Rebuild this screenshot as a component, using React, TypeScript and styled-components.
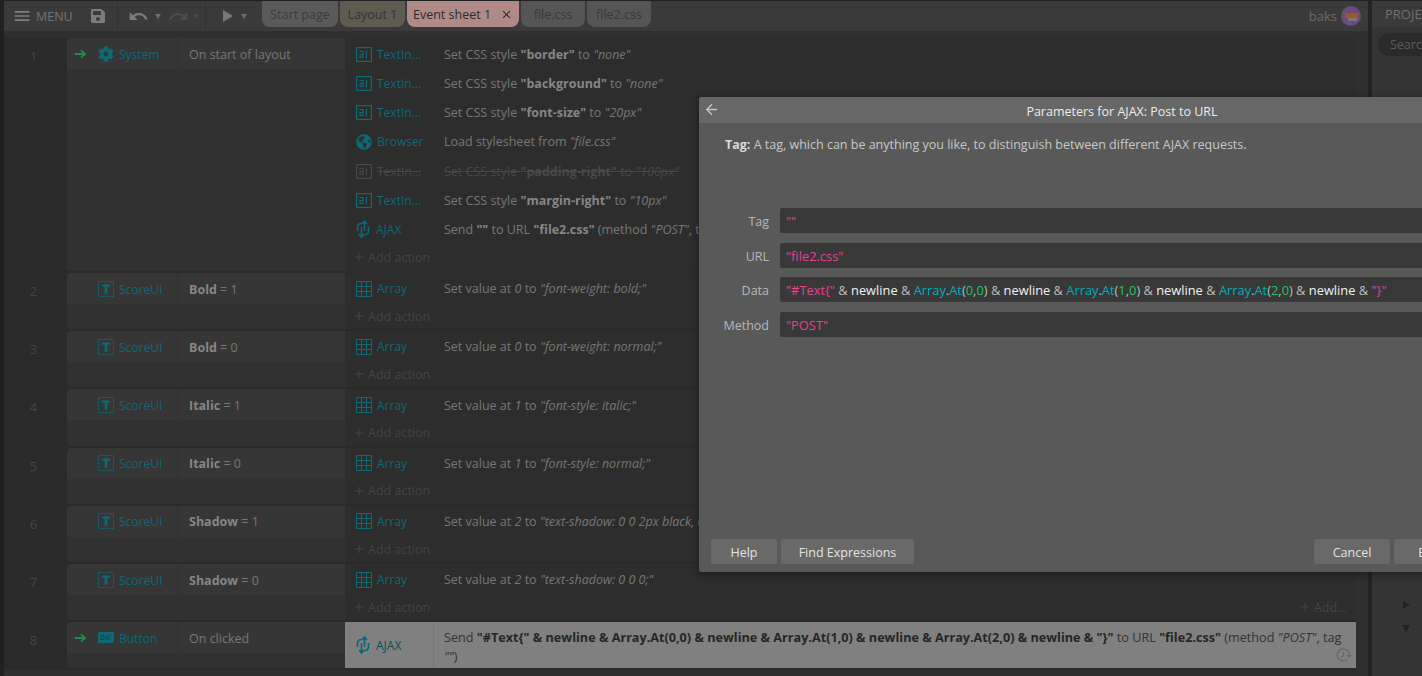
import React from 'react';
import styled, { createGlobalStyle } from 'styled-components';
import { FaCog, FaGlobeAmericas, FaSave } from 'react-icons/fa';
import { MdAdd, MdArrowBack, MdClose, MdHistory, MdMenu, MdRedo, MdUndo } from 'react-icons/md';

const Global = createGlobalStyle`
  html, body { margin:0; padding:0; height:100%; overflow:hidden; background:#232323; }
  body { font-family:"Open Sans", "Noto Sans", sans-serif; font-size:12.5px; color:#7a7a7a; }
  #root { height:100%; }
`;

const Page = styled.div`
  position:relative;
  display:flex;
  width:1422px;
  height:676px;
  overflow:hidden;
  background:#212121;
  padding:1px 0 0 4px;
  box-sizing:border-box;
`;

const Main = styled.div`
  width:1364px;
  display:flex;
  flex-direction:column;
  flex:none;
`;

const Toolbar = styled.div`
  height:30px;
  background:#3a3a3a;
  display:flex;
  align-items:flex-start;
  flex:none;
  padding-right:7px;
`;

const ToolGroup = styled.div<{ $w: number; $pad: number; $last?: boolean }>`
  width:${p => p.$w}px;
  height:30px;
  padding-left:${p => p.$pad}px;
  display:flex;
  align-items:center;
  flex:none;
  box-sizing:border-box;
  border-right:${p => (p.$last ? 'none' : '1px solid #343434')};
  color:#7c7c7c;
`;

const MenuText = styled.span`
  font-size:12.5px;
  margin-left:4px;
  color:#737373;
`;

const SaveIcon = styled(FaSave)`
  margin-left:17px;
`;

const RedoIcon = styled(MdRedo)`
  margin-left:7px;
  color:#4c4c4c;
`;

const Caret = styled.span<{ $off?: boolean; $gap?: number }>`
  width:0;
  height:0;
  margin-left:${p => p.$gap ?? 6}px;
  border-left:3.5px solid transparent;
  border-right:3.5px solid transparent;
  border-top:5px solid ${p => (p.$off ? '#4a4a4a' : '#6c6c6c')};
`;

const PlayIcon = styled.span`
  width:0;
  height:0;
  border-top:6px solid transparent;
  border-bottom:6px solid transparent;
  border-left:10px solid #787878;
`;

const Tabs = styled.div`
  display:flex;
  gap:2px;
  flex:1;
`;

const Tab = styled.div<{ $bg: string; $w: number; $color?: string }>`
  width:${p => p.$w}px;
  height:26px;
  background:${p => p.$bg};
  color:${p => p.$color || '#333'};
  border-radius:0 0 8px 8px;
  font-size:12.5px;
  display:flex;
  align-items:center;
  justify-content:center;
  gap:9px;
  box-sizing:border-box;
  flex:none;
`;

const User = styled.div`
  display:flex;
  align-items:center;
  gap:4px;
  height:30px;
  font-size:13px;
  color:#6a6a6a;
  box-sizing:border-box;
`;

const Avatar = styled.div`
  width:20px;
  height:20px;
  border-radius:50%;
  background:
    linear-gradient(#9c5a22, #9c5a22) 50% 7px / 13px 5px no-repeat,
    linear-gradient(#7c7480, #7c7480) 60% 12px / 9px 3px no-repeat,
    #6b4a7c;
`;

const Sheet = styled.div`
  flex:1;
  background:#2f2f2f;
  padding-top:7px;
  display:flex;
  flex-direction:column;
  gap:2px;
  overflow:hidden;
`;

const EventRow = styled.div<{ $min?: number }>`
  display:grid;
  grid-template-columns:63px 278px 1011px;
  flex:none;
  background:#2a2a2a;
  width:1352px;
  box-shadow:0 2px 0 #2a2a2a;
  min-height:${p => p.$min ?? 0}px;
`;

const EventNum = styled.div`
  text-align:center;
  padding:9px 4px 0 0;
  font-size:13px;
  color:#454545;
`;

const Conditions = styled.div`
  background:#313131;
  border-radius:4px 0 0 4px;
`;

const CondHead = styled.div`
  height:31px;
  background:#363636;
  display:flex;
  align-items:center;
  border-radius:4px 0 0 0;
`;

const ObjName = styled.span`
  color:#0d6976;
  font-size:12px;
  margin-left:5px;
  white-space:nowrap;
`;

const CondObj = styled.div`
  width:111px;
  height:100%;
  display:flex;
  align-items:center;
  flex:none;
  padding-left:8px;
  box-sizing:border-box;
  border-right:1px solid #313131;
  ${ObjName} { padding-top:1px; }
`;

const ArrowSlot = styled.div`
  width:23px;
  flex:none;
  display:flex;
  align-items:center;
`;

const CondText = styled.div`
  padding:1px 0 0 11px;
  color:#777;
`;

const Bold = styled.b`
  font-weight:700;
  color:#868686;
`;

const Ital = styled.i`
  font-style:italic;
`;

const Actions = styled.div<{ $top?: number }>`
  display:flex;
  flex-direction:column;
  padding-top:${p => p.$top ?? 1}px;
  background:#2d2d2d;
`;

const ActionRow = styled.div<{ $off?: boolean }>`
  display:flex;
  align-items:center;
  height:29.14px;
  flex:none;
  color:${p => (p.$off ? '#484848' : '#777')};
  text-decoration:${p => (p.$off ? 'line-through' : 'none')};
  ${Bold} { color:${p => (p.$off ? '#484848' : '#868686')}; }
  ${ObjName} { color:${p => (p.$off ? '#484848' : '#0d6976')}; }
`;

const SelectedRow = styled.div`
  display:flex;
  align-items:stretch;
  height:46px;
  flex:none;
  background:#808080;
  color:#333;
  position:relative;
  ${Bold} { color:#262626; }
`;

const ActObj = styled.div`
  width:89px;
  flex:none;
  height:100%;
  display:flex;
  align-items:center;
  padding-left:11px;
  box-sizing:border-box;
  border-right:1px solid #2b2b2b;
`;

const SelObj = styled(ActObj)`
  height:auto;
  border-right:1px solid #757575;
  ${ObjName} { color:#0b4d58; }
`;

const ActText = styled.div`
  padding-left:10px;
  white-space:nowrap;
`;

const SelText = styled.div`
  padding:6px 12px 0 10px;
  line-height:19px;
  font-size:12.65px;
`;

const ClockSlot = styled.div`
  position:absolute;
  right:3px;
  bottom:4px;
  color:#696969;
  display:flex;
  transform:scaleX(-1);
`;

const AddRow = styled.div`
  flex:1;
  min-height:26.1px;
  display:flex;
  align-items:center;
  justify-content:space-between;
  padding:0 9px 0 7px;
  color:#444;
`;

const AddLabel = styled.span`
  display:flex;
  align-items:center;
  gap:2px;
`;

const Divider = styled.div`
  width:4px;
  flex:none;
  background:#232323;
`;

const Panel = styled.div`
  flex:1;
  background:#343434;
  display:flex;
  flex-direction:column;
  overflow:hidden;
  white-space:nowrap;
`;

const PanelHead = styled.div`
  height:26px;
  background:#3a3a3a;
  padding-left:13px;
  display:flex;
  align-items:center;
  font-size:13px;
  color:#707070;
  flex:none;
`;

const Search = styled.div`
  height:23px;
  margin:6px 0 0 6px;
  border-radius:12px 0 0 12px;
  background:#2a2a2a;
  padding-left:12px;
  display:flex;
  align-items:center;
  color:#5c5c5c;
  flex:none;
`;

const Tree = styled.div`
  margin-top:auto;
  padding:0 0 44px 30px;
  display:flex;
  flex-direction:column;
  gap:16px;
`;

const TreeArrow = styled.span<{ $open?: boolean }>`
  width:0;
  height:0;
  ${p => p.$open
    ? 'border-left:4px solid transparent;border-right:4px solid transparent;border-top:7px solid #222;'
    : 'border-top:4px solid transparent;border-bottom:4px solid transparent;border-left:7px solid #222;margin-left:1px;'}
`;

const Modal = styled.div`
  position:absolute;
  left:699px;
  top:97px;
  width:846px;
  height:475px;
  background:#595959;
  border-radius:3px;
  box-shadow:0 2px 10px rgba(0,0,0,.45);
  display:flex;
  flex-direction:column;
  z-index:5;
`;

const ModalHead = styled.div`
  position:relative;
  height:26px;
  padding-top:2px;
  box-sizing:border-box;
  background:#676767;
  border-radius:3px 3px 0 0;
  display:flex;
  align-items:center;
  justify-content:center;
  font-size:12.5px;
  font-weight:400;
  color:#ececec;
  flex:none;
`;

const BackBtn = styled.span`
  position:absolute;
  left:4px;
  top:4px;
  display:flex;
  color:#c4c4c4;
`;

const Desc = styled.div`
  padding:13px 26px 0;
  color:#c8c8c8;
  font-size:12.5px;
  b { font-weight:700; color:#d8d8d8; }
`;

const Fields = styled.div`
  margin-top:55px;
  padding:0 12px 0 0;
  display:grid;
  grid-template-columns:70px 1fr;
  column-gap:11px;
  row-gap:9.5px;
  align-items:center;
`;

const FieldLabel = styled.div`
  text-align:right;
  padding-top:2px;
  color:#b8b8b8;
`;

const FieldBox = styled.div`
  height:25px;
  background:#383838;
  border-radius:2px;
  padding:1px 0 0 6px;
  box-sizing:border-box;
  display:flex;
  align-items:center;
  white-space:pre;
  font-size:12.85px;
  color:#bdbdbd;
`;

const Str = styled.span`
  color:#ea3f98;
`;

const Obj = styled.span`
  color:#00adc0;
`;

const Num = styled.span`
  color:#1fc45e;
`;

const Kw = styled.span`
  color:#f2f2f2;
`;

const Footer = styled.div`
  margin-top:auto;
  padding:0 12px 8px;
  display:flex;
  justify-content:space-between;
`;

const BtnGroup = styled.div`
  display:flex;
  gap:4px;
`;

const Btn = styled.div<{ $w: number }>`
  width:${p => p.$w}px;
  height:25px;
  padding-top:1px;
  box-sizing:border-box;
  border-radius:2px;
  background:#696969;
  color:#e4e4e4;
  display:flex;
  align-items:center;
  justify-content:center;
`;

const GreenArrow = () => (
  <svg width="12" height="10" viewBox="0 0 12 10">
    <path d="M0 5h9M6 1.5L10 5 6 8.5" fill="none" stroke="#1f8a4a" strokeWidth="2" />
  </svg>
);

const TextInputIcon = ({ off }: { off?: boolean }) => {
  const c = off ? '#484848' : '#0d6976';
  return (
    <svg width="16" height="15" viewBox="0 0 16 15" style={{ flex: 'none' }}>
      <rect x="0.6" y="0.6" width="14.8" height="13.8" fill="none" stroke={c} strokeWidth="1.2" />
      <path d="M3.500 4.500h3.500v6H4v-3h3M10.500 3.500v8" fill="none" stroke={c} strokeWidth="1.2" />
    </svg>
  );
};

const ArrayIcon = () => (
  <svg width="16" height="16" viewBox="0 0 16 16" style={{ flex: 'none' }}>
    <path d="M.5.5h15v15H.5zM5.500.5v15M10.500.5v15M.5 5.500h15M.5 10.500h15" fill="none" stroke="#0d6976" />
  </svg>
);

const AjaxIcon = ({ c }: { c: string }) => (
  <svg width="14" height="18" viewBox="0 0 14 18" style={{ flex: 'none', marginRight: 1 }}>
    <path
      d="M1.500 11V7.500C1.500 5 3 3.500 5.500 3.500M8.500 11V1.500M6 4l2.500-3L11 4M12.500 7v3.500c0 2.500-1.500 4-4 4M5.500 7v9.500M3 14l2.500 3L8 14"
      fill="none"
      stroke={c}
      strokeWidth="1.600"
    />
  </svg>
);

const SpriteFontIcon = () => (
  <svg width="16" height="16" viewBox="0 0 16 16" style={{ flex: 'none' }}>
    <rect x="0.5" y="0.5" width="15" height="15" fill="none" stroke="#0d6976" strokeDasharray="2 1" />
    <path d="M4 3.500h8v2.200H9.300v7H6.700v-7H4z" fill="#0d6976" />
  </svg>
);

const ButtonIcon = () => (
  <svg width="16" height="11" viewBox="0 0 16 11" style={{ flex: 'none' }}>
    <rect width="16" height="11" rx="1" fill="#0d6976" />
    <path d="M3 3.500h3v4H3zM9 3v5M12.500 3L9.500 5.500 12.500 8" fill="none" stroke="#0a4750" />
  </svg>
);

const Cond = ({ arrow, icon, name, children }: { arrow?: boolean; icon: React.ReactNode; name: string; children: React.ReactNode }) => (
  <CondHead>
    <CondObj>
      <ArrowSlot>{arrow && <GreenArrow />}</ArrowSlot>
      {icon}
      <ObjName>{name}</ObjName>
    </CondObj>
    <CondText>{children}</CondText>
  </CondHead>
);

const Action = ({ icon, name, off, children }: { icon: React.ReactNode; name: string; off?: boolean; children: React.ReactNode }) => (
  <ActionRow $off={off}>
    <ActObj>{icon}<ObjName>{name}</ObjName></ActObj>
    <ActText>{children}</ActText>
  </ActionRow>
);

const AddAction = ({ more }: { more?: boolean }) => (
  <AddRow>
    <AddLabel><MdAdd size={14} />Add action</AddLabel>
    {more && <AddLabel><MdAdd size={14} />Add...</AddLabel>}
  </AddRow>
);

const scoreEvents = [
  { n: 2, prop: 'Bold', v: 1, slot: 0, css: 'font-weight: bold;' },
  { n: 3, prop: 'Bold', v: 0, slot: 0, css: 'font-weight: normal;' },
  { n: 4, prop: 'Italic', v: 1, slot: 1, css: 'font-style: italic;' },
  { n: 5, prop: 'Italic', v: 0, slot: 1, css: 'font-style: normal;' },
  { n: 6, prop: 'Shadow', v: 1, slot: 2, css: 'text-shadow: 0 0 2px black, 0 0 2px black;' },
  { n: 7, prop: 'Shadow', v: 0, slot: 2, css: 'text-shadow: 0 0 0;' },
];

const cssActions = [
  ['border', 'none'],
  ['background', 'none'],
  ['font-size', '20px'],
];

export default function App() {
  return (
    <Page>
      <Global />
      <Main>
        <Toolbar>
          <ToolGroup $w={114} $pad={8}>
            <MdMenu size={20} />
            <MenuText>MENU</MenuText>
            <SaveIcon size={16} />
          </ToolGroup>
          <ToolGroup $w={88} $pad={10}>
            <MdUndo size={21} />
            <Caret />
            <RedoIcon size={21} />
            <Caret $off $gap={4} />
          </ToolGroup>
          <ToolGroup $w={56} $pad={17} $last>
            <PlayIcon />
            <Caret $gap={8} />
          </ToolGroup>
          <Tabs>
            <Tab $bg="#5a5a5a" $w={76} $color="#3a3a3a">Start page</Tab>
            <Tab $bg="#5e5c50" $w={65} $color="#333">Layout 1</Tab>
            <Tab $bg="#b08a86" $w={112} $color="#2b2b2b">Event sheet 1<MdClose size={13} /></Tab>
            <Tab $bg="#555555" $w={64} $color="#383838">file.css</Tab>
            <Tab $bg="#555555" $w={64} $color="#383838">file2.css</Tab>
          </Tabs>
          <User>baks<Avatar /></User>
        </Toolbar>
        <Sheet>
          <EventRow $min={233}>
            <EventNum>1</EventNum>
            <Conditions>
              <Cond arrow icon={<FaCog size={16} color="#0d6976" />} name="System">On start of layout</Cond>
            </Conditions>
            <Actions $top={2}>
              {cssActions.map(([k, v]) => (
                <Action key={k} icon={<TextInputIcon />} name="TextIn...">
                  Set CSS style <Bold>"{k}"</Bold> to <Ital>"{v}"</Ital>
                </Action>
              ))}
              <Action icon={<FaGlobeAmericas size={16} color="#0d6976" />} name="Browser">
                Load stylesheet from <Ital>"file.css"</Ital>
              </Action>
              <Action off icon={<TextInputIcon off />} name="TextIn...">
                Set CSS style <Bold>"padding-right"</Bold> to <Ital>"100px"</Ital>
              </Action>
              <Action icon={<TextInputIcon />} name="TextIn...">
                Set CSS style <Bold>"margin-right"</Bold> to <Ital>"10px"</Ital>
              </Action>
              <Action icon={<AjaxIcon c="#0d6976" />} name="AJAX">
                Send <Bold>""</Bold> to URL <Bold>"file2.css"</Bold> (method <Ital>"POST"</Ital>, tag <Ital>""</Ital>)
              </Action>
              <AddAction />
            </Actions>
          </EventRow>
          {scoreEvents.map(e => (
            <EventRow key={e.n}>
              <EventNum>{e.n}</EventNum>
              <Conditions>
                <Cond icon={<SpriteFontIcon />} name="ScoreUI"><Bold>{e.prop}</Bold> = {e.v}</Cond>
              </Conditions>
              <Actions>
                <Action icon={<ArrayIcon />} name="Array">
                  Set value at <Ital>{e.slot}</Ital> to <Ital>"{e.css}"</Ital>
                </Action>
                <AddAction more={e.n === 7} />
              </Actions>
            </EventRow>
          ))}
          <EventRow>
            <EventNum>8</EventNum>
            <Conditions>
              <Cond arrow icon={<ButtonIcon />} name="Button">On clicked</Cond>
            </Conditions>
            <Actions $top={0}>
              <SelectedRow>
                <SelObj><AjaxIcon c="#0b6674" /><ObjName>AJAX</ObjName></SelObj>
                <SelText>
                  Send <Bold>"#Text{'{'}" &amp; newline &amp; Array.At(0,0) &amp; newline &amp; Array.At(1,0) &amp; newline &amp; Array.At(2,0) &amp; newline &amp; "{'}'}"</Bold> to URL <Bold>"file2.css"</Bold> (method <Ital>"POST"</Ital>, tag <Ital>""</Ital>)
                </SelText>
                <ClockSlot><MdHistory size={18} /></ClockSlot>
              </SelectedRow>
            </Actions>
          </EventRow>
        </Sheet>
      </Main>
      <Divider />
      <Panel>
        <PanelHead>PROJECT</PanelHead>
        <Search>Search</Search>
        <Tree>
          <TreeArrow />
          <TreeArrow $open />
        </Tree>
      </Panel>
      <Modal>
        <ModalHead>
          <BackBtn><MdArrowBack size={17} /></BackBtn>
          Parameters for AJAX: Post to URL
        </ModalHead>
        <Desc><b>Tag:</b> A tag, which can be anything you like, to distinguish between different AJAX requests.</Desc>
        <Fields>
          <FieldLabel>Tag</FieldLabel>
          <FieldBox><Str>""</Str></FieldBox>
          <FieldLabel>URL</FieldLabel>
          <FieldBox><Str>"file2.css"</Str></FieldBox>
          <FieldLabel>Data</FieldLabel>
          <FieldBox>
            <Str>"#Text{'{'}"</Str> &amp; <Kw>newline</Kw> &amp; <Obj>Array</Obj>.<Obj>At</Obj>(<Num>0</Num>,<Num>0</Num>) &amp; <Kw>newline</Kw> &amp; <Obj>Array</Obj>.<Obj>At</Obj>(<Num>1</Num>,<Num>0</Num>) &amp; <Kw>newline</Kw> &amp; <Obj>Array</Obj>.<Obj>At</Obj>(<Num>2</Num>,<Num>0</Num>) &amp; <Kw>newline</Kw> &amp; <Str>"{'}'}"</Str>
          </FieldBox>
          <FieldLabel>Method</FieldLabel>
          <FieldBox><Str>"POST"</Str></FieldBox>
        </Fields>
        <Footer>
          <BtnGroup>
            <Btn $w={66}>Help</Btn>
            <Btn $w={133}>Find Expressions</Btn>
          </BtnGroup>
          <BtnGroup>
            <Btn $w={76}>Cancel</Btn>
            <Btn $w={76}>Back</Btn>
            <Btn $w={59}>Done</Btn>
          </BtnGroup>
        </Footer>
      </Modal>
    </Page>
  );
}
